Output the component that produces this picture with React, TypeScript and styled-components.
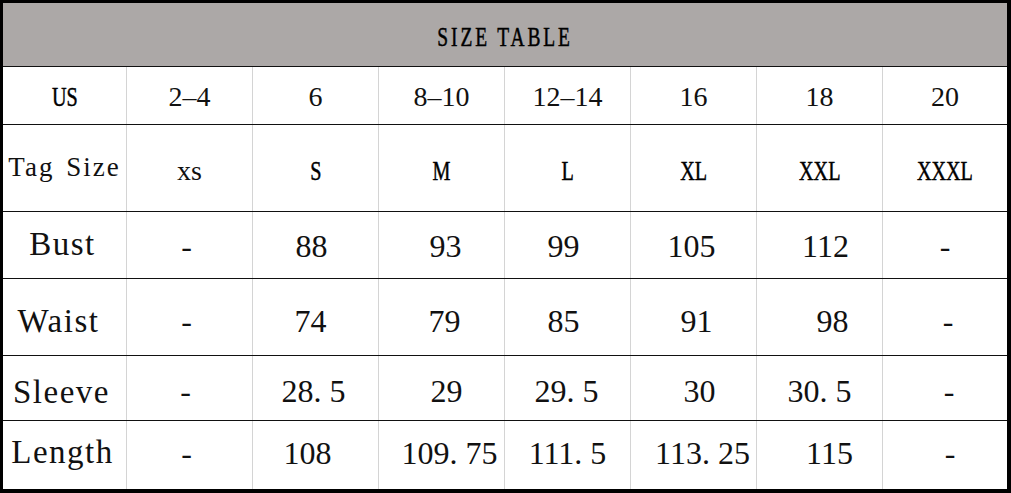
import styled, { createGlobalStyle } from "styled-components";

const GlobalStyle = createGlobalStyle`
  html, body {
    margin: 0;
    padding: 0;
    background: #fff;
  }
  body {
    font-family: "Liberation Serif", "Times New Roman", serif;
    color: #111;
  }
`;

const Frame = styled.div`
  box-sizing: border-box;
  width: 1011px;
  height: 493px;
  border-style: solid;
  border-color: #000;
  border-width: 3px 4px 4px 3px;
  display: flex;
  flex-direction: column;
`;

const Title = styled.div`
  box-sizing: border-box;
  height: 64px;
  padding-top: 6px;
  background: #aca8a7;
  border-bottom: 1px solid #111;
  display: flex;
  align-items: center;
  justify-content: center;
  font-size: 27px;
`;

const Row = styled.div<{ $h: number; $last?: boolean }>`
  display: grid;
  grid-template-columns: 123px repeat(6, 126px) 125px;
  height: ${(p) => p.$h}px;
  border-bottom: ${(p) => (p.$last ? "none" : "1px solid #111")};
`;

const shift = (dx = 0, dy = 0) => `
  padding-left: ${dx > 0 ? dx * 2 : 0}px;
  padding-right: ${dx < 0 ? -dx * 2 : 0}px;
  padding-top: ${dy > 0 ? dy * 2 : 0}px;
  padding-bottom: ${dy < 0 ? -dy * 2 : 0}px;
`;

const Cell = styled.div<{ $dx?: number; $dy?: number }>`
  box-sizing: border-box;
  display: flex;
  align-items: center;
  justify-content: center;
  border-left: 1px solid #d4d4d4;
  white-space: nowrap;
  line-height: 1;
  ${(p) => shift(p.$dx, p.$dy)}
  &:first-child {
    border-left: none;
  }
`;

const HeadText = styled.span`
  font-size: 28px;
`;

// SimSun-like narrow capitals
const Caps = styled.span<{ $gap?: number }>`
  display: inline-block;
  transform: scaleX(0.72);
  letter-spacing: ${(p) => p.$gap ?? 0}px;
  color: #000;
  -webkit-text-stroke: 0.5px #000;
`;

const TagLabel = styled.span`
  font-size: 27px;
  letter-spacing: 2px;
  word-spacing: 3px;
`;

const Label = styled.span`
  font-size: 33px;
  letter-spacing: 1.5px;
`;

const Value = styled.span`
  font-size: 32px;
`;

type Val = [string, number];

const sizes = ["2–4", "6", "8–10", "12–14", "16", "18", "20"];
const tags = ["xs", "S", "M", "L", "XL", "XXL", "XXXL"];

const measures: { label: string; h: number; dy: number; ldx: number; ldy: number; vals: Val[] }[] = [
  {
    label: "Bust",
    h: 66,
    dy: 1,
    ldx: -2,
    ldy: -1,
    vals: [["-", -3], ["88", -4], ["93", 4], ["99", -4], ["105", -2], ["112", 6], ["-", 0]],
  },
  {
    label: "Waist",
    h: 76,
    dy: 4,
    ldx: -6,
    ldy: 4,
    vals: [["-", -3], ["74", -5], ["79", 3], ["85", -4], ["91", 3], ["98", 13], ["-", 3]],
  },
  {
    label: "Sleeve",
    h: 64,
    dy: 3,
    ldx: -3,
    ldy: 4,
    vals: [["-", -4], ["28. 5", -2], ["29", 5], ["29. 5", -1], ["30", 6], ["30. 5", 0], ["-", 4]],
  },
  {
    label: "Length",
    h: 68,
    dy: -2,
    ldx: -2,
    ldy: -3,
    vals: [["-", -3], ["108", -8], ["109. 75", 8], ["111. 5", 0], ["113. 25", 9], ["115", 10], ["-", 5]],
  },
];

export default function App() {
  return (
    <>
      <GlobalStyle />
      <Frame>
        <Title>
          <Caps $gap={4}>SIZE TABLE</Caps>
        </Title>
        <Row $h={57}>
          <Cell $dy={1.5}>
            <HeadText>
              <Caps>US</Caps>
            </HeadText>
          </Cell>
          {sizes.map((s) => (
            <Cell key={s} $dy={1.5}>
              <HeadText>{s}</HeadText>
            </Cell>
          ))}
        </Row>
        <Row $h={86}>
          <Cell $dy={-1}>
            <TagLabel>Tag Size</TagLabel>
          </Cell>
          {tags.map((t) => (
            <Cell key={t} $dy={3}>
              <HeadText>{t === "xs" ? t : <Caps>{t}</Caps>}</HeadText>
            </Cell>
          ))}
        </Row>
        {measures.map((m, i) => (
          <Row key={m.label} $h={m.h} $last={i === measures.length - 1}>
            <Cell $dx={m.ldx} $dy={m.ldy}>
              <Label>{m.label}</Label>
            </Cell>
            {m.vals.map(([v, dx], j) => (
              <Cell key={j} $dx={dx} $dy={m.dy}>
                <Value>{v}</Value>
              </Cell>
            ))}
          </Row>
        ))}
      </Frame>
    </>
  );
}
